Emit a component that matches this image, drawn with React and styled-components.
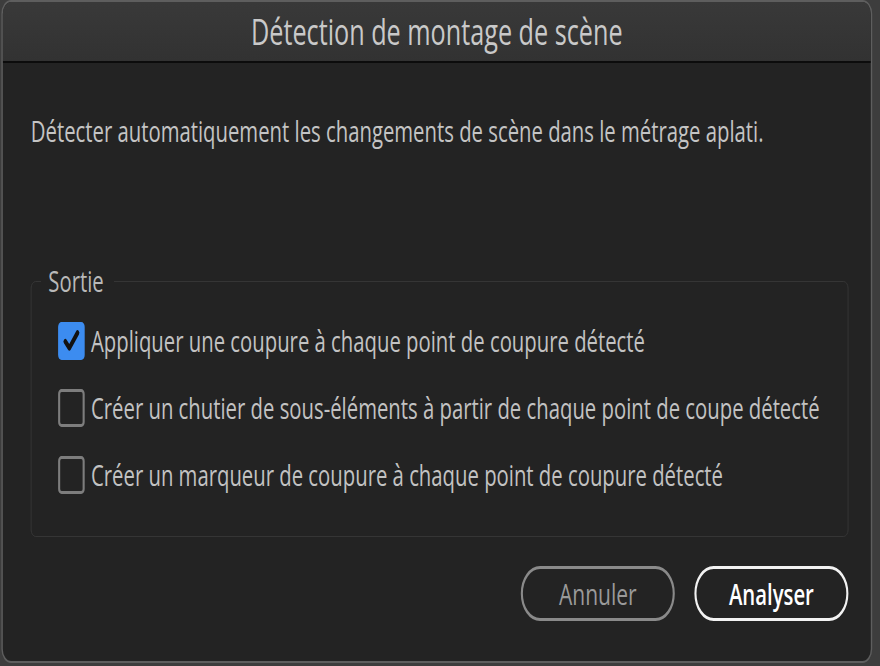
import React from 'react';
import styled, { createGlobalStyle } from 'styled-components';

// the reference is squeezed horizontally, so the dialog is laid out wide and scaled
const SQUEEZE = 0.7;

const GlobalStyle = createGlobalStyle`
  html, body {
    margin: 0;
    padding: 0;
    background: #3d3d3d;
    overflow: hidden;
  }
`;

const Stage = styled.div`
  width: ${880 / SQUEEZE}px;
  height: 666px;
  transform: scaleX(${SQUEEZE});
  transform-origin: left top;
  font-family: "Open Sans", "Liberation Sans", sans-serif;
`;

const Dialog = styled.div`
  margin-left: 2px;
  width: 1244px;
  height: 663px;
  box-sizing: border-box;
  border: 2px solid #5e5e5e;
  border-radius: 14px;
  background: #232323;
  overflow: hidden;
  display: flex;
  flex-direction: column;
`;

const TitleBar = styled.div`
  height: 59px;
  background: linear-gradient(#393939, #323232);
  border-bottom: 2px solid #0c0c0c;
  display: flex;
  align-items: center;
  justify-content: center;
  color: #c9c9c9;
  font-size: 36px;
`;

const Body = styled.div`
  flex: 1;
  padding: 0 32px 0 40px;
  display: flex;
  flex-direction: column;
`;

const Description = styled.p`
  margin: 50px 0 0;
  color: #c4c4c4;
  font-size: 29px;
  line-height: 36px;
`;

const Group = styled.fieldset`
  margin: 116px 0 0;
  padding: 24px 0 41px 38px;
  border: 1px solid #393939;
  border-radius: 7px;
  display: flex;
  flex-direction: column;
  gap: 27px;
`;

const Legend = styled.legend`
  margin-left: -24px;
  padding: 0 15px 0 10px;
  color: #b9b9b9;
  font-size: 29px;
  line-height: 32px;
`;

const Row = styled.label`
  display: flex;
  align-items: center;
  gap: 9px;
  color: #c2c2c2;
  font-size: 29px;
  line-height: 40px;
`;

const Box = styled.span`
  width: 38px;
  height: 38px;
  box-sizing: border-box;
  border-radius: 5px;
  border: ${(p) => (p.$checked ? 'none' : '3px solid #7d7d7d')};
  background: ${(p) => (p.$checked ? '#3c8cf0' : 'transparent')};
  display: flex;
  align-items: center;
  justify-content: center;
  flex-shrink: 0;
`;

const Footer = styled.div`
  margin-top: 29px;
  display: flex;
  justify-content: flex-end;
  gap: 28px;
`;

const Button = styled.button`
  width: 220px;
  height: 55px;
  border-radius: 28px;
  background: transparent;
  font-family: inherit;
  font-size: ${(p) => (p.$primary ? 29 : 30)}px;
  border: 3px solid ${(p) => (p.$primary ? '#f2f2f2' : '#8a8a8a')};
  color: ${(p) => (p.$primary ? '#ffffff' : '#9a9a9a')};
  font-weight: ${(p) => (p.$primary ? 600 : 400)};
`;

const options = [
  { text: 'Appliquer une coupure à chaque point de coupure détecté', checked: true },
  { text: 'Créer un chutier de sous-éléments à partir de chaque point de coupe détecté', checked: false },
  { text: 'Créer un marqueur de coupure à chaque point de coupure détecté', checked: false },
];

const Check = () => (
  <svg width="28" height="28" viewBox="0 0 24 24">
    <path d="M4.5 12.5 L9.5 18 L19.5 5" fill="none" stroke="#121212" strokeWidth="4.4" strokeLinecap="round" strokeLinejoin="round" />
  </svg>
);

const App = () => (
  <Stage>
    <GlobalStyle />
    <Dialog>
      <TitleBar>Détection de montage de scène</TitleBar>
      <Body>
        <Description>Détecter automatiquement les changements de scène dans le métrage aplati.</Description>
        <Group>
          <Legend>Sortie</Legend>
          {options.map((o) => (
            <Row key={o.text}>
              <Box $checked={o.checked}>{o.checked && <Check />}</Box>
              {o.text}
            </Row>
          ))}
        </Group>
        <Footer>
          <Button>Annuler</Button>
          <Button $primary>Analyser</Button>
        </Footer>
      </Body>
    </Dialog>
  </Stage>
);

export default App;
